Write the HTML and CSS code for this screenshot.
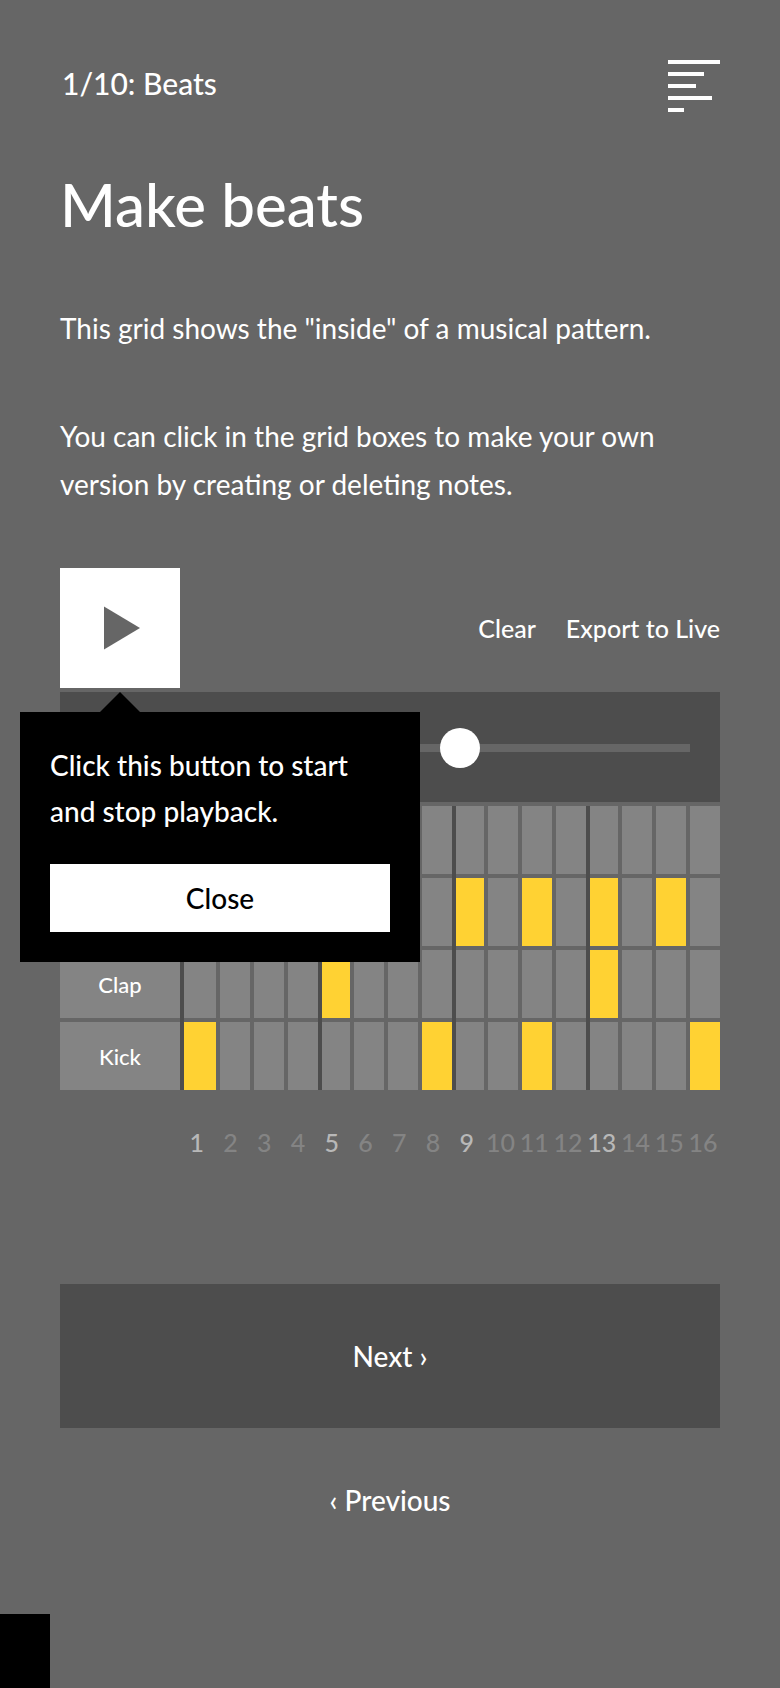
FILE: index.html
```html
<!DOCTYPE html>
<html lang="en">
<head>
<meta charset="utf-8">
<meta name="viewport" content="width=device-width, initial-scale=1">
<title>Make beats</title>
<link rel="stylesheet" href="styles.css">
</head>
<body>
<div class="page">
  <header class="header">
    <a class="chapter" href="#lesson">1/10: Beats</a>
    <button class="menu" type="button" aria-label="Menu">
      <svg class="menu-icon" viewBox="0 0 52 52" aria-hidden="true">
        <path d="M0 0h52v4H0zM0 12h36v4H0zM0 24h28v4H0zM0 36h44v4H0zM0 48h16v4H0z"/>
      </svg>
    </button>
  </header>

  <main id="lesson">
    <h1 class="title">Make beats</h1>
    <p class="text">This grid shows the "inside" of a musical pattern.</p>
    <p class="text">You can click in the grid boxes to make your own version by creating or deleting notes.</p>

    <section class="sequencer">
      <div class="toolbar">
        <div class="play-wrap">
          <button class="play" type="button" aria-label="Play">
            <svg class="play-icon" viewBox="0 0 36 44" aria-hidden="true"><path d="M0 0.5L36 22L0 43.5z"/></svg>
          </button>
          <div class="tip" role="dialog" aria-labelledby="tip-text">
            <p class="tip-text" id="tip-text">Click this button to start and stop playback.</p>
            <button class="tip-close" type="button">Close</button>
          </div>
        </div>
        <div class="actions">
          <button class="action" type="button">Clear</button>
          <button class="action" type="button">Export to Live</button>
        </div>
      </div>

      <div class="tempo">
        <input class="tempo-slider" type="range" min="0" max="160" value="100" aria-label="Tempo">
      </div>

      <div class="grid" id="grid"></div>
      <div class="counts" id="counts"></div>
    </section>
  </main>

  <nav class="pager">
    <a class="pager-link pager-next" href="#next">Next ›</a>
    <a class="pager-link" href="#previous">‹ Previous</a>
  </nav>
  <div class="corner"></div>
</div>
<script src="grid.js"></script>
</body>
</html>
```

FILE: styles.css
```css
* {
  box-sizing: border-box;
}

:root {
  --bg: #666666;
  --panel: #4d4d4d;
  --cell: #848484;
  --note: #ffd233;
}

body {
  margin: 0;
  background: var(--bg);
  color: #ffffff;
  font-family: Lato, "Open Sans", sans-serif;
  font-size: 28px;
  font-weight: 500;
}

button {
  margin: 0;
  padding: 0;
  border: 0;
  background: none;
  color: inherit;
  font: inherit;
  cursor: pointer;
}

a {
  color: inherit;
  text-decoration: none;
}

.page {
  position: relative;
  min-height: 100vh;
  padding: 60px 60px 116px;
}

.header {
  display: flex;
  justify-content: space-between;
  align-items: flex-start;
}

.chapter {
  padding-left: 2px;
  font-size: 30px;
  line-height: 46px;
}

.menu,
.menu-icon {
  display: block;
  width: 52px;
  height: 52px;
}

.menu-icon {
  fill: #ffffff;
}

.title {
  margin: 52px 0 0;
  font-size: 60px;
  font-weight: 500;
  line-height: 80px;
}

.text {
  margin: 60px 0 0;
  font-size: 28px;
  font-weight: 400;
  line-height: 48px;
}

.sequencer {
  margin-top: 60px;
}

.toolbar {
  display: flex;
  justify-content: space-between;
  align-items: center;
  margin-bottom: 4px;
}

.play-wrap {
  position: relative;
}

.play {
  display: flex;
  justify-content: center;
  align-items: center;
  width: 120px;
  height: 120px;
  background: #ffffff;
}

.play-icon {
  width: 36px;
  height: 44px;
  margin-left: 4px;
  fill: var(--bg);
}

.tip {
  position: absolute;
  z-index: 2;
  top: 144px;
  left: -40px;
  width: 400px;
  padding: 30px;
  background: #000000;
}

.tip::before {
  content: "";
  position: absolute;
  bottom: 100%;
  left: 80px;
  border: 20px solid transparent;
  border-top-width: 0;
  border-bottom-color: #000000;
}

.tip-text {
  margin: 0 0 30px;
  line-height: 46px;
}

.tip-close {
  display: block;
  width: 100%;
  background: #ffffff;
  color: #000000;
  line-height: 68px;
}

.actions {
  display: flex;
  gap: 30px;
}

.action {
  font-size: 25px;
  line-height: 48px;
}

.tempo {
  display: flex;
  align-items: center;
  height: 110px;
  margin-bottom: 4px;
  padding: 2px 30px 0;
  background: var(--panel);
}

.tempo-slider {
  width: 100%;
  height: 40px;
  margin: 0;
  appearance: none;
  background: linear-gradient(var(--bg), var(--bg)) center / 100% 8px no-repeat;
}

.tempo-slider::-webkit-slider-thumb {
  appearance: none;
  width: 40px;
  height: 40px;
  border-radius: 50%;
  background: #ffffff;
}

.grid {
  display: grid;
  row-gap: 4px;
}

.row {
  display: grid;
  grid-template-columns: 120px 32fr 30fr 30fr 30fr 28fr 30fr 30fr 30fr 28fr 30fr 30fr 30fr 28fr 30fr 30fr 30fr;
  column-gap: 4px;
}

.name {
  height: 68px;
  background: var(--cell);
  font-size: 22px;
  line-height: 70px;
  text-align: center;
}

.cell {
  position: relative;
  height: 68px;
  background: var(--cell);
}

/* Divider before each beat, carried down through the row gap */
.cell.beat::before {
  content: "";
  position: absolute;
  top: 0;
  right: 100%;
  width: 4px;
  height: 72px;
  background: var(--panel);
}

.row:last-child .cell.beat::before {
  height: 68px;
}

.cell.on {
  background: var(--note);
}

.counts {
  display: grid;
  grid-template-columns: repeat(16, 1fr);
  margin-top: 28px;
  padding-left: 120px;
}

.count {
  display: flex;
  justify-content: center;
  min-width: 0;
  color: var(--cell);
  font-size: 25px;
  line-height: 48px;
}

.count.beat {
  color: #b8b8b8;
}

.pager {
  display: grid;
  margin-top: 118px;
}

.pager-link {
  line-height: 144px;
  text-align: center;
}

.pager-next {
  background: var(--panel);
}

.corner {
  position: absolute;
  bottom: 0;
  left: 0;
  width: 50px;
  height: 74px;
  background: #000000;
}
```

FILE: grid.js
```js
const rows = [
  { name: "", notes: [] },
  { name: "", notes: [1, 3, 5, 7, 9, 11, 13, 15] },
  { name: "Clap", notes: [5, 13] },
  { name: "Kick", notes: [1, 8, 11, 16] }
];
const grid = document.getElementById("grid");
const counts = document.getElementById("counts");

function add(parent, tag, className, text) {
  const el = document.createElement(tag);
  el.className = className;
  if (text) el.textContent = text;
  parent.append(el);
  return el;
}

for (const { name, notes } of rows) {
  const row = add(grid, "div", "row");
  if (name) {
    add(row, "button", "name", name).type = "button";
  } else {
    add(row, "div", "name");
  }
  for (let step = 1; step <= 16; step++) {
    const cell = add(row, "button", "cell");
    cell.type = "button";
    cell.classList.toggle("beat", step % 4 === 1);
    cell.classList.toggle("on", notes.includes(step));
    cell.setAttribute("aria-label", (name + " step " + step).trim());
    cell.setAttribute("aria-pressed", notes.includes(step));
    cell.addEventListener("click", () => {
      cell.setAttribute("aria-pressed", cell.classList.toggle("on"));
    });
  }
}

for (let step = 1; step <= 16; step++) {
  add(counts, "span", step % 4 === 1 ? "count beat" : "count", String(step));
}
```
